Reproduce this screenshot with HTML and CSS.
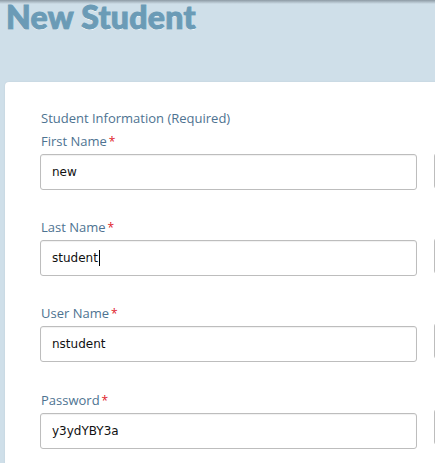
FILE: index.html
```html
<!DOCTYPE html>
<html>
<head>
<meta charset="utf-8">
<link rel="stylesheet" href="styles.css">
</head>
<body>
<div class="page">
  <h1 class="title">New Student</h1>
  <div class="card">
    <div class="columns">
      <section class="col">
        <h2 class="section-title">Student Information (Required)</h2>
        <div class="field">
          <label class="label">First Name<span class="req">*</span></label>
          <input class="input" type="text" value="new">
        </div>
        <div class="field">
          <label class="label">Last Name<span class="req">*</span></label>
          <div class="input input-focus"><span>student</span><span class="caret"></span></div>
        </div>
        <div class="field">
          <label class="label">User Name<span class="req">*</span></label>
          <input class="input" type="text" value="nstudent">
        </div>
        <div class="field field-last">
          <label class="label">Password<span class="req">*</span></label>
          <input class="input" type="text" value="y3ydYBY3a">
        </div>
      </section>
      <section class="col col-alt">
        <h2 class="section-title">Optional</h2>
        <div class="field">
          <label class="label">Email</label>
          <input class="input" type="text" value="">
        </div>
        <div class="field">
          <label class="label">Phone</label>
          <input class="input" type="text" value="">
        </div>
        <div class="field">
          <label class="label">Grade</label>
          <input class="input" type="text" value="">
        </div>
        <div class="field field-last">
          <label class="label">School</label>
          <input class="input" type="text" value="">
        </div>
      </section>
    </div>
  </div>
</div>
</body>
</html>
```

FILE: styles.css
```css
html, body {
  margin: 0;
  padding: 0;
  height: 100%;
  overflow: hidden;
}
body {
  background: #cfdfe9;
}
.page {
  min-height: 100%;
  background: linear-gradient(to bottom, rgba(60, 70, 80, 0.45) 0, rgba(60, 70, 80, 0) 4px), #cfdfe9;
  padding-top: 0;
}
.title {
  margin: 0;
  padding-left: 6px;
  font-family: "Lato", "Open Sans", sans-serif;
  font-weight: 900;
  font-size: 32px;
  line-height: 34px;
  color: #6b9bb6;
  -webkit-text-stroke: 1px #6b9bb6;
  text-shadow: 0 1px 0 #fff;
  letter-spacing: 0.3px;
}
.card {
  margin: 48px 0 0 5px;
  width: 900px;
  background: #fff;
  border-radius: 4px 0 0 0;
  padding: 26px 0 40px 35px;
  box-shadow: 0 0 2px rgba(0, 0, 0, 0.08);
}
.columns {
  display: flex;
  gap: 17px;
}
.col {
  flex: 0 0 377px;
  width: 377px;
  display: flex;
  flex-direction: column;
}
.section-title {
  margin: 0 0 3px 1px;
  font-family: "Open Sans", sans-serif;
  font-weight: 400;
  font-size: 13px;
  line-height: 20px;
  color: #4e7391;
}
.field {
  display: flex;
  flex-direction: column;
  margin-bottom: 27px;
}
.field-last {
  margin-top: 1px;
}
.label {
  font-family: "Open Sans", sans-serif;
  font-size: 13px;
  line-height: 20px;
  color: #4e7391;
  margin: 0 0 2px 1px;
}
.req {
  color: #e0202a;
  margin-left: 2px;
  font-size: 12px;
}
.col-alt .section-title,
.col-alt .label {
  color: #e9a766;
}
.input {
  box-sizing: border-box;
  height: 36px;
  width: 100%;
  border: 1px solid #bdbdbd;
  border-radius: 3px;
  padding: 0 11px;
  font-family: "DejaVu Sans", sans-serif;
  font-size: 12px;
  color: #111;
  background: #fff;
  box-shadow: inset 0 1px 1px rgba(0, 0, 0, 0.06);
  outline: none;
  margin: 0;
}
.input-focus {
  display: flex;
  align-items: center;
}
.caret {
  display: inline-block;
  width: 1px;
  height: 16px;
  background: #000;
  margin-left: 1px;
}
```
